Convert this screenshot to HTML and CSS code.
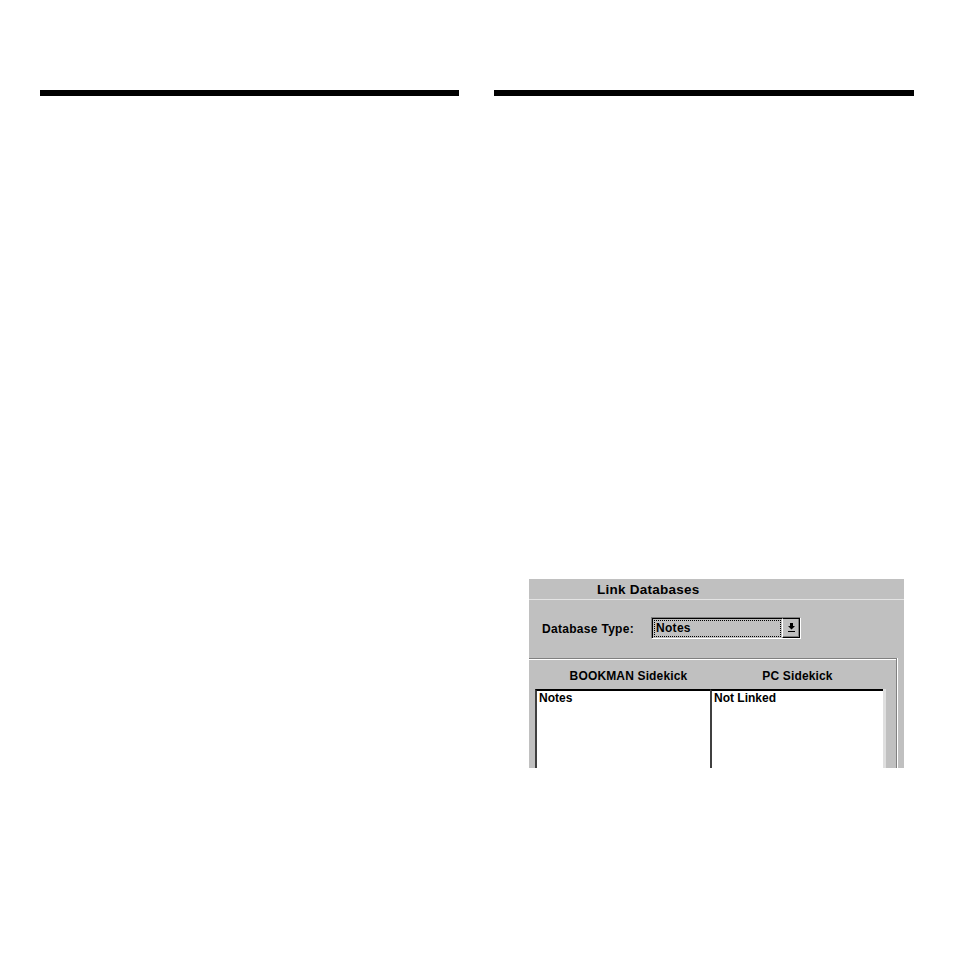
FILE: index.html
```html
<!DOCTYPE html>
<html>
<head>
<meta charset="utf-8">
<link rel="stylesheet" href="styles.css">
</head>
<body>
<div class="page">
  <div class="col col-left">
    <div class="rule"></div>
  </div>
  <div class="col col-right">
    <div class="rule"></div>
    <div class="shot">
      <div class="titlebar">Link Databases</div>
      <div class="sep"></div>
      <div class="typerow">
        <span class="label">Database Type:</span>
        <div class="combo">
          <div class="combo-field"><span class="focus">Notes</span></div>
          <div class="combo-btn">
            <svg width="9" height="10" viewBox="0 0 9 10"><path d="M3 0h3v3h2L4.5 6.5 1 3h2z" fill="#000"/><rect x="1" y="8" width="7" height="1" fill="#000"/></svg>
          </div>
        </div>
      </div>
      <div class="group">
        <div class="heads">
          <div class="head head-l">BOOKMAN Sidekick</div>
          <div class="head head-r">PC Sidekick</div>
        </div>
        <div class="lists">
          <div class="list list-l">Notes</div>
          <div class="list list-r">Not Linked</div>
        </div>
      </div>
    </div>
  </div>
</div>
</body>
</html>
```
FILE: styles.css
```css
html, body {
  margin: 0;
  padding: 0;
  background: #fff;
}
.page {
  display: flex;
  padding: 90px 0 0 40px;
  gap: 35px;
}
.col {
  width: 420px;
}
.col-left {
  width: 419px;
}
.rule {
  height: 6px;
  background: #000;
}
.shot {
  margin: 483px 0 0 35px;
  width: 375px;
  height: 189px;
  background: #c0c0c0;
  overflow: hidden;
  font-family: "Liberation Sans", Arial, sans-serif;
  font-weight: bold;
  font-size: 12px;
  color: #000;
}
.titlebar {
  height: 20px;
  line-height: 21px;
  padding-left: 68px;
  font-size: 13.5px;
  letter-spacing: 0.25px;
  box-sizing: border-box;
}
.sep {
  height: 1px;
  background: #e4e4e4;
}
.typerow {
  display: flex;
  align-items: center;
  height: 58px;
  padding: 0 0 0 13px;
}
.label {
  width: 109px;
  letter-spacing: 0.3px;
  margin-top: -1px;
}
.combo {
  display: flex;
  width: 150px;
  height: 22px;
  box-sizing: border-box;
  border-top: 1px solid #808080;
  border-left: 1px solid #808080;
  border-right: 1px solid #fff;
  border-bottom: 1px solid #fff;
  margin-top: -2px;
}
.combo-field {
  flex: 1;
  border-top: 1px solid #000;
  border-left: 1px solid #000;
  padding: 1px;
  display: flex;
}
.focus {
  flex: 1;
  border: 1px dotted #000;
  line-height: 15px;
  padding-left: 1px;
  letter-spacing: 0.3px;
}
.combo-btn {
  width: 16px;
  border-top: 1px solid #000;
  border-left: 1px solid #fff;
  border-right: 1px solid #000;
  border-bottom: 1px solid #000;
  box-shadow: inset -1px -1px 0 #808080;
  display: flex;
  align-items: center;
  justify-content: center;
}
.group {
  margin-right: 7px;
  border-top: 1px solid #808080;
  border-right: 1px solid #808080;
  box-shadow: 1px 0 0 #fff, inset 0 1px 0 #fff;
  height: 200px;
}
.heads {
  display: flex;
  height: 30px;
  align-items: center;
  padding-left: 6px;
}
.head {
  width: 175px;
  text-align: center;
  padding-top: 4px;
  letter-spacing: 0.15px;
}
.head-l {
  padding-left: 12px;
  box-sizing: border-box;
}
.lists {
  display: flex;
  padding-left: 6px;
}
.list {
  background: #fff;
  height: 100px;
  box-sizing: border-box;
  border-top: 2px solid #000;
  border-left: 2px solid #404040;
  padding: 1px 0 0 2px;
  line-height: 13px;
}
.list-l {
  width: 175px;
}
.list-r {
  width: 173px;
  box-shadow: 1px 0 0 #dfdfdf, 2px 0 0 #dfdfdf, 3px 0 0 #dfdfdf;
}
```
